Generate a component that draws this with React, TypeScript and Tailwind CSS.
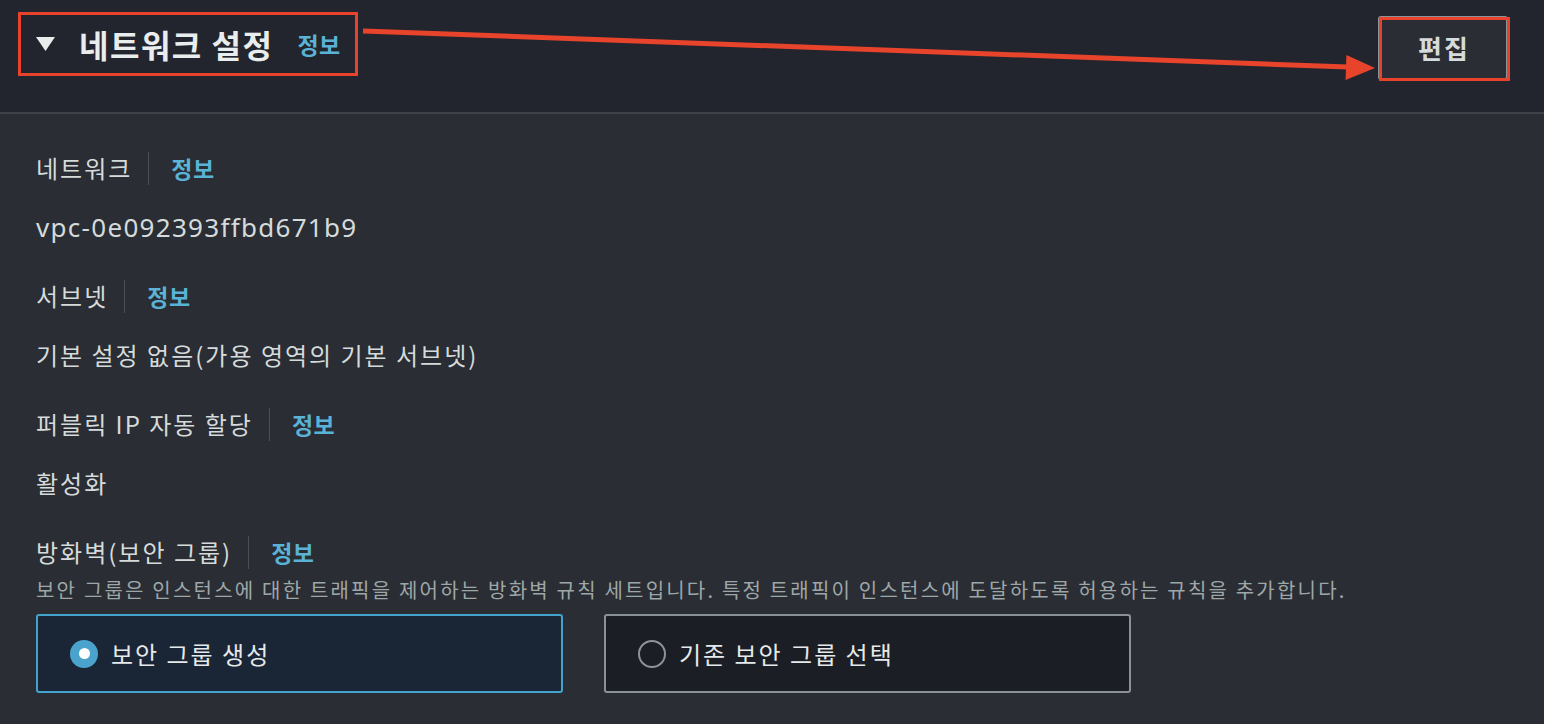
import React from "react";

const FONT = { fontFamily: '"Noto Sans CJK KR", "Noto Sans", sans-serif' };

function InfoLink({ className = "" }: { className?: string }) {
  return <span className={`font-bold text-[#5ab3d6] tracking-[0.5px] ${className}`}>정보</span>;
}

function LabelRow({ label }: { label: string }) {
  return (
    <div className="flex items-center h-[34px]">
      <span className="text-[24px] tracking-[2px] text-[#d5dbdb] leading-none">{label}</span>
      <span className="ml-[16px] mr-[22px] w-px h-[33px] bg-[#4a5058]" />
      <InfoLink className="text-[23px] leading-none" />
    </div>
  );
}

function Value({ children }: { children: React.ReactNode }) {
  return (
    <div className="text-[24px] tracking-[2px] text-[#d5dbdb] leading-none h-[30px] flex items-center">
      {children}
    </div>
  );
}

export default function App() {
  return (
    <div className="relative w-[1544px] h-[724px] bg-[#2a2d33] overflow-hidden" style={FONT}>
      {/* Header */}
      <div className="h-[112px] bg-[#22252d] flex items-start justify-between pl-[18px] pr-[36px] pt-[12px]">
        <div className="flex items-center h-[64px] border-[3px] border-[#e8412c] pl-[15px] pr-[14px]">
          <svg width="19" height="14" viewBox="0 0 19 14" className="mr-[24px]">
            <polygon points="0,0 19,0 9.5,14" fill="#eaeded" />
          </svg>
          <span className="text-[32px] tracking-[1.5px] font-bold text-[#eaeded] leading-none">네트워크 설정</span>
          <InfoLink className="text-[23px] leading-none ml-[24px]" />
        </div>
        <div className="relative mt-[4px] w-[130px] h-[64px] rounded-[3px] border-2 border-[#8d9399] bg-[#2a2d33] flex items-center justify-center">
          <span className="text-[26px] tracking-[2px] font-bold text-[#d5dbdb] leading-none pl-[2px]">편집</span>
          <div className="absolute -left-[1px] -top-[1px] w-[131px] h-[64px] border-[3px] border-[#e8412c]" />
        </div>
      </div>
      <div className="h-[2px] bg-[#3d424a]" />

      {/* Body */}
      <div className="pl-[36px] pt-[37px] flex flex-col">
        <LabelRow label="네트워크" />
        <div className="h-[27px]" />
        <div
          className="text-[26px] tracking-[1.3px] text-[#d5dbdb] leading-none h-[30px] flex items-center"
          style={{ fontFamily: '"Noto Sans", "Noto Sans CJK KR", sans-serif' }}
        >
          vpc-0e092393ffbd671b9
        </div>
        <div className="h-[37px]" />
        <LabelRow label="서브넷" />
        <div className="h-[27px]" />
        <Value>기본 설정 없음(가용 영역의 기본 서브넷)</Value>
        <div className="h-[37px]" />
        <LabelRow label="퍼블릭 IP 자동 할당" />
        <div className="h-[27px]" />
        <Value>활성화</Value>
        <div className="h-[37px]" />
        <LabelRow label="방화벽(보안 그룹)" />
        <div className="text-[20px] tracking-[2.2px] text-[#9ea7a8] leading-none mt-[11px] whitespace-nowrap">
          보안 그룹은 인스턴스에 대한 트래픽을 제어하는 방화벽 규칙 세트입니다. 특정 트래픽이 인스턴스에 도달하도록 허용하는 규칙을 추가합니다.
        </div>
        <div className="flex gap-[41px] mt-[14px]">
          <div className="w-[527px] h-[79px] rounded-[3px] border-2 border-[#44a3cc] bg-[#1a2636] flex items-center pl-[32px]">
            <span className="w-[28px] h-[28px] rounded-full bg-[#4aa3cc] flex items-center justify-center">
              <span className="w-[11px] h-[11px] rounded-full bg-white" />
            </span>
            <span className="ml-[13px] text-[24px] tracking-[2px] text-[#e6e9ea] leading-none">보안 그룹 생성</span>
          </div>
          <div className="w-[527px] h-[79px] rounded-[3px] border-2 border-[#8b9296] bg-[#1b1e25] flex items-center pl-[32px]">
            <span className="w-[28px] h-[28px] rounded-full border-2 border-[#8d9399]" />
            <span className="ml-[13px] text-[24px] tracking-[2px] text-[#e6e9ea] leading-none">기존 보안 그룹 선택</span>
          </div>
        </div>
      </div>

      {/* Annotation arrow */}
      <svg className="absolute inset-0 pointer-events-none" width="1544" height="724">
        <line x1="363" y1="31" x2="1348" y2="67" stroke="#e8442c" strokeWidth="5" />
        <polygon points="1375,68 1346.4,55 1345.6,80" fill="#e8442c" />
      </svg>
    </div>
  );
}
